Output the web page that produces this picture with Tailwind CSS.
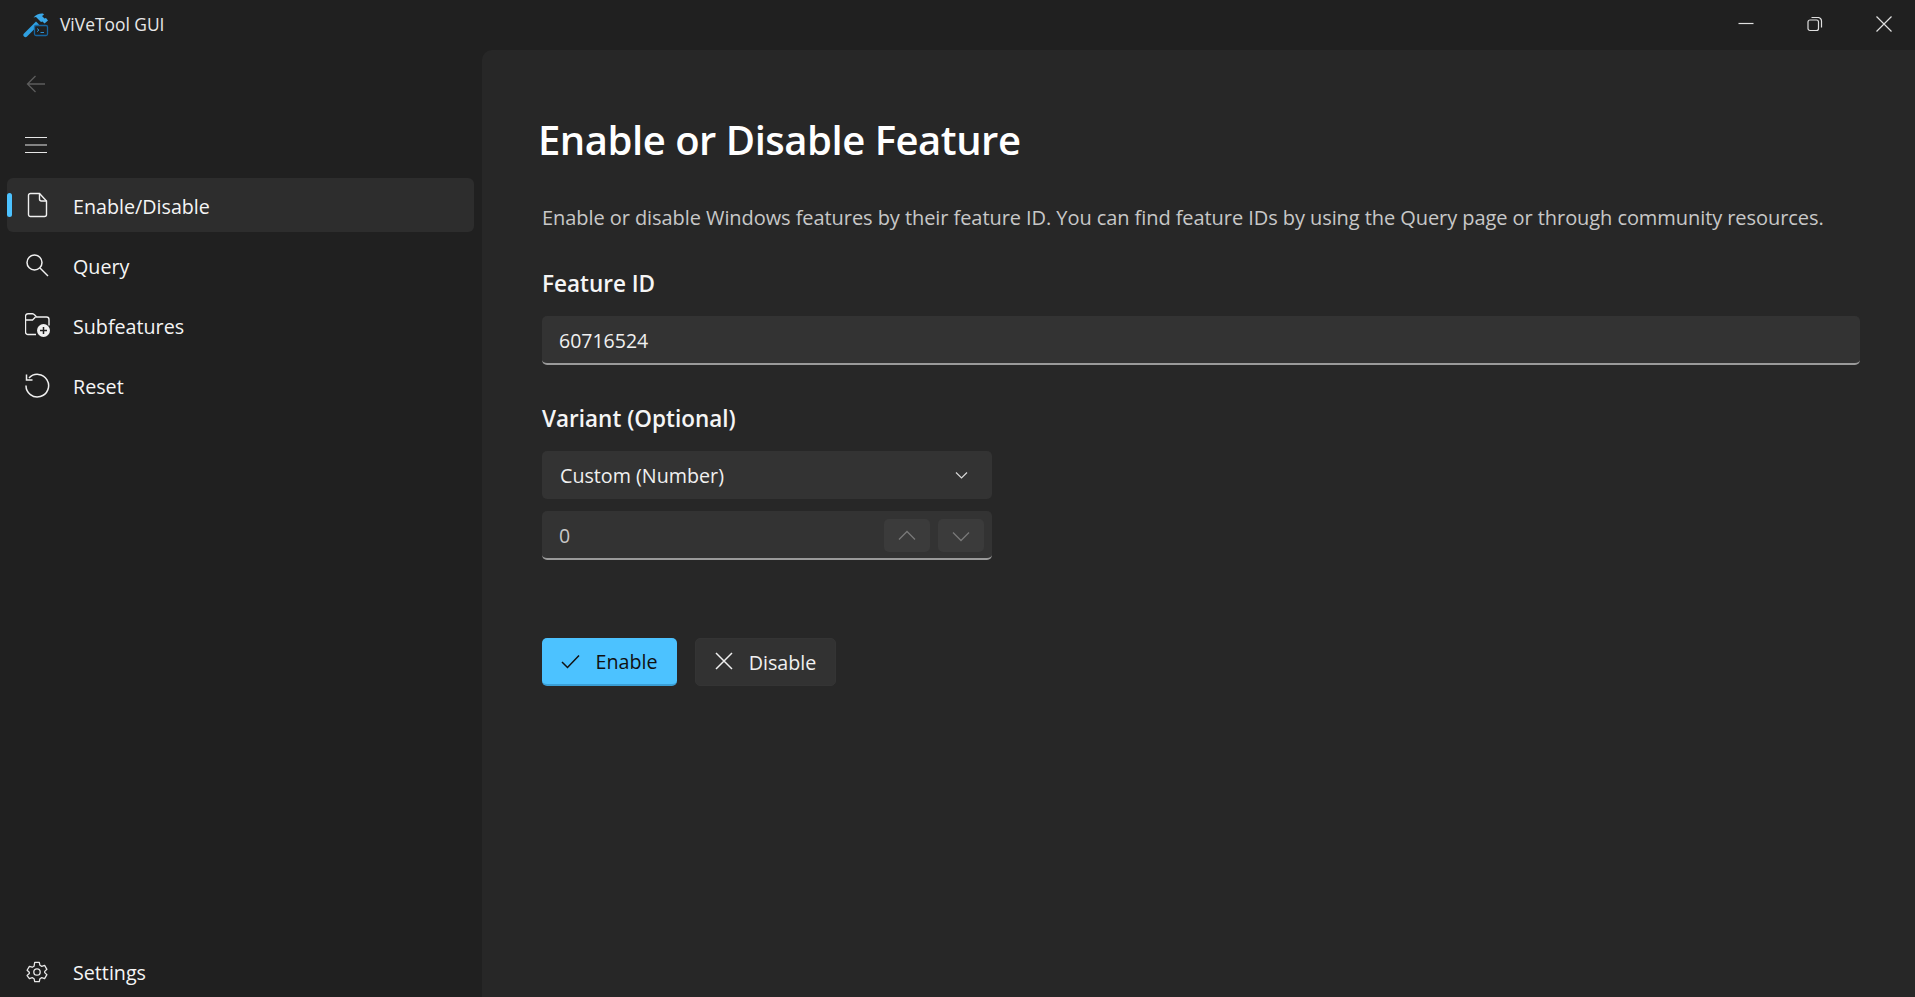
<!DOCTYPE html>
<html lang="en">
<head>
<meta charset="utf-8">
<title>ViVeTool GUI</title>
<script src="https://cdn.jsdelivr.net/npm/@tailwindcss/browser@4"></script>
</head>
<body class="bg-[#202020] font-['Open_Sans','Noto_Sans',sans-serif] text-[#f5f5f5] overflow-hidden">
<div class="flex h-screen w-screen flex-col">
  <!-- Title bar -->
  <header class="flex h-[50px] shrink-0 items-center justify-between">
    <div class="flex items-center">
      <svg class="ml-[23px] h-[26px] w-[26px]" viewBox="0 0 26 26" fill="none">
        <path d="M1 21.500 13 9.500l3 3L4 24.500a1.600 1.600 0 0 1-3-3z" fill="#2f9fe0"/>
        <path d="M10.500 5.500C13 2.500 17 1 20 1.500l1 1.200-2 1.300 2.500 2.500 1.500-.5 2 2.500-3.500 3-2-2-1.500 .5-4-4-1-1z" fill="#3aa8e8"/>
        <rect x="11.500" y="13.500" width="13" height="10" rx="1.500" fill="#202020" stroke="#17659f" stroke-width="1.300"/>
        <path d="m14 16.500 2 1.600-2 1.600M17.500 20.500h3.500" stroke="#2f8fd0" stroke-width="1"/>
      </svg>
      <span class="ml-[11px] text-[17.400px] leading-none text-[#e8e8e8]">ViVeTool GUI</span>
    </div>
    <div class="flex items-center gap-[53px] pr-[23px]">
      <button class="flex h-[50px] w-[16px] items-center justify-center">
        <svg class="h-4 w-4" viewBox="0 0 16 16" fill="none" stroke="#e0e0e0" stroke-width="1.200"><path d="M0.500 6.500h15"/></svg>
      </button>
      <button class="flex h-[50px] w-[16px] items-center justify-center">
        <svg class="h-4 w-4" viewBox="0 0 16 16" fill="none" stroke="#e0e0e0" stroke-width="1.200"><rect x="1" y="3" width="10.500" height="10.500" rx="2"/><path d="M4.500 .5h6.500a3.500 3.500 0 0 1 3.500 3.500v6.500"/></svg>
      </button>
      <button class="-mt-[2px] flex h-[50px] w-[16px] items-center justify-center">
        <svg class="h-4 w-4" viewBox="0 0 16 16" fill="none" stroke="#e0e0e0" stroke-width="1.200"><path d="m0.500 0.500 15 15M15.500 0.500l-15 15"/></svg>
      </button>
    </div>
  </header>

  <div class="flex min-h-0 flex-1">
    <!-- Navigation -->
    <nav class="flex w-[482px] shrink-0 flex-col text-[19.700px] leading-none">
      <div class="flex h-[68px] shrink-0 items-center pl-[26px]">
        <svg class="h-[20px] w-[20px]" viewBox="0 0 20 20" fill="none" stroke="#5c5c5c" stroke-width="1.300"><path d="M19 10H1.500M9.500 2 1.500 10l8 8"/></svg>
      </div>
      <div class="flex h-[53px] shrink-0 items-center pl-[25px]">
        <svg class="h-[18px] w-[22px]" viewBox="0 0 22 18" fill="none" stroke="#e6e6e6" stroke-width="1.200"><path d="M0 1.500h22M0 9h22M0 16.500h22"/></svg>
      </div>
      <div class="mt-[7px] flex flex-col gap-[6px] pl-[7px] pr-[8px]">
        <a class="relative flex h-[54px] items-center rounded-[6px] bg-[#2d2d2d] pl-[20px]">
          <span class="absolute left-0 top-[15px] h-[24px] w-[5px] rounded-full bg-[#4cc2ff]"></span>
          <svg class="h-[26px] w-[22px]" viewBox="0 0 22 26" fill="none" stroke="#f0f0f0" stroke-width="1.400"><path d="M3.500 1.500h9l7 7.500v13.500a2 2 0 0 1-2 2h-14a2 2 0 0 1-2-2v-19a2 2 0 0 1 2-2z"/><path d="M12.500 1.500v5.500a2 2 0 0 0 2 2h5"/></svg>
          <span class="ml-[24px] pt-[4px]">Enable/Disable</span>
        </a>
        <a class="flex h-[54px] items-center pl-[18px]">
          <svg class="h-[24px] w-[24px]" viewBox="0 0 24 24" fill="none" stroke="#f0f0f0" stroke-width="1.500"><circle cx="9.500" cy="9.500" r="7.500"/><path d="m15 15 8 8"/></svg>
          <span class="ml-[24px] pt-[4px]">Query</span>
        </a>
        <a class="flex h-[54px] items-center pl-[18px]">
          <svg class="h-[24px] w-[25px]" viewBox="0 0 25 24" fill="none"><path d="M11 21.500H3a2.500 2.500 0 0 1-2.500-2.500V3A2.500 2.500 0 0 1 3 .7h4.500c1 0 1.500.5 2.500 1.500l1.500 1.800h10a2.500 2.500 0 0 1 2.500 2.500v6" stroke="#f0f0f0" stroke-width="1.400"/><path d="M.5 7h7l3-3" stroke="#f0f0f0" stroke-width="1.400"/><circle cx="18.500" cy="17.500" r="6.500" fill="#f0f0f0"/><path d="M18.500 14v7M15 17.500h7" stroke="#202020" stroke-width="1.500"/></svg>
          <span class="ml-[23px] pt-[4px]">Subfeatures</span>
        </a>
        <a class="flex h-[54px] items-center pl-[18px]">
          <svg class="h-[25px] w-[25px]" viewBox="0 0 25 25" fill="none" stroke="#f0f0f0" stroke-width="1.500"><path d="M4 5a11.300 11.300 0 1 1-3 7.500"/><path d="M1.500 1.500V7H7.500"/></svg>
          <span class="ml-[23px] pt-[4px]">Reset</span>
        </a>
      </div>
      <a class="mt-auto flex h-[50px] shrink-0 items-center pl-[26px]">
        <svg class="h-[22px] w-[22px]" viewBox="0 0 24 24" fill="none" stroke="#e8e8e8" stroke-width="1.400" stroke-linejoin="round"><circle cx="12" cy="12" r="3.500"/><path d="M9.500 1.500h5l.7 3.200 2 1.100 3.100-1 2.500 4.300-2.400 2.200v1.400l2.400 2.200-2.500 4.300-3.100-1-2 1.100-.7 3.200h-5l-.7-3.200-2-1.100-3.100 1L1.200 15.900l2.400-2.200v-1.400L1.200 10.100l2.500-4.300 3.100 1 2-1.100z"/></svg>
        <span class="ml-[25px] pt-[2px]">Settings</span>
      </a>
    </nav>

    <!-- Page content -->
    <main class="min-w-0 flex-1 rounded-tl-[10px] bg-[#272727] pl-[60px] pr-[55px]">
      <h1 class="mt-[67px] -ml-[4px] text-[40px] font-semibold leading-[46px] tracking-[-0.47px] text-white">Enable or Disable Feature</h1>
      <p class="mt-[41px] text-[20px] leading-[28px] tracking-[-0.07px] text-[#c8c8c8]">Enable or disable Windows features by their feature ID. You can find feature IDs by using the Query page or through community resources.</p>
      <label class="mt-[38px] block text-[22.500px] font-semibold leading-[28px] text-[#f5f5f5]">Feature ID</label>
      <div class="mt-[18px] flex h-[49px] items-center rounded-[5px] border-b-[2px] border-b-[#9a9a9a] bg-[#333333] px-[17px] pt-[2px] text-[19.500px] text-[#f0f0f0]">60716524</div>
      <label class="mt-[40px] block text-[22.500px] font-semibold leading-[28px] text-[#f5f5f5]">Variant (Optional)</label>
      <div class="mt-[18px] flex w-[450px] flex-col gap-[12px]">
        <div class="flex h-[48px] items-center justify-between rounded-[5px] bg-[#333333] pl-[18px] pr-[24px] text-[19.700px] text-[#f0f0f0]">
          <span class="pt-[1px]">Custom (Number)</span>
          <svg class="h-[12px] w-[13px]" viewBox="0 0 13 12" fill="none" stroke="#d8d8d8" stroke-width="1.200"><path d="m1 3.500 5.500 5.500L12 3.500"/></svg>
        </div>
        <div class="flex h-[49px] items-start justify-between rounded-[5px] border-b-[2px] border-b-[#9a9a9a] bg-[#333333] pl-[17px] pr-[8px] text-[19.500px] text-[#c8c8c8]">
          <span class="mt-[12px] leading-[26px]">0</span>
          <div class="mt-[8px] flex gap-[8px]">
            <button class="flex h-[33px] w-[46px] items-center justify-center rounded-[5px] bg-[#3b3b3b]">
              <svg class="h-[12px] w-[18px]" viewBox="0 0 18 12" fill="none" stroke="#797979" stroke-width="1.300"><path d="m1 9.500 8-8 8 8"/></svg>
            </button>
            <button class="flex h-[33px] w-[46px] items-center justify-center rounded-[5px] bg-[#3b3b3b]">
              <svg class="h-[12px] w-[18px]" viewBox="0 0 18 12" fill="none" stroke="#797979" stroke-width="1.300"><path d="m1 2.500 8 8 8-8"/></svg>
            </button>
          </div>
        </div>
      </div>
      <div class="mt-[78px] flex gap-[18px] text-[19.700px]">
        <button class="flex h-[48px] w-[135px] items-center justify-center gap-[15px] rounded-[5px] border-b-[2px] border-b-[#3a9fd6] bg-[#4cc2ff] text-[#101010]">
          <svg class="h-[15px] w-[19px]" viewBox="0 0 19 15" fill="none" stroke="#111111" stroke-width="1.500"><path d="m1 8 5.500 5.500L18 1.500"/></svg>
          <span class="pt-[2px]">Enable</span>
        </button>
        <button class="flex h-[48px] w-[141px] items-center justify-center gap-[16px] rounded-[5px] border border-[#343434] bg-[#323232] text-[#f0f0f0]">
          <svg class="-mt-[3px] h-[18px] w-[18px]" viewBox="0 0 18 18" fill="none" stroke="#f0f0f0" stroke-width="1.500"><path d="m1 1 16 16M17 1 1 17"/></svg>
          <span class="pt-[1px]">Disable</span>
        </button>
      </div>
    </main>
  </div>
</div>
</body>
</html>
